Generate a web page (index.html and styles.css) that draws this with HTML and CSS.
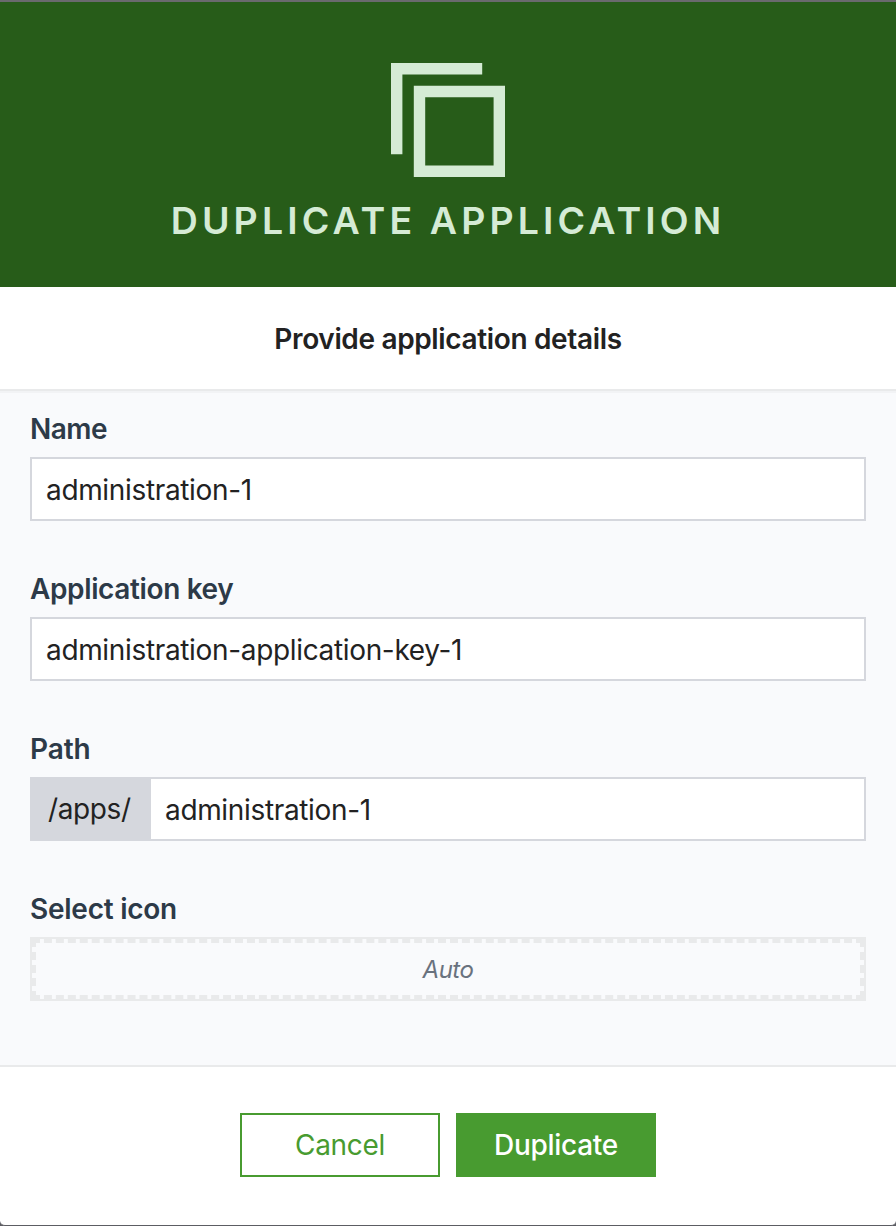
FILE: index.html
```html
<!DOCTYPE html>
<html lang="en">
<head>
<meta charset="utf-8">
<title>Duplicate application</title>
<link rel="stylesheet" href="styles.css">
</head>
<body>
<main class="dialog">
  <header class="hero">
    <svg class="hero-icon" viewBox="0 0 10 10" aria-hidden="true"><path fill="currentColor" fill-rule="evenodd" d="M0 0H8V1H1V8H0ZM2 2H10V10H2ZM3 3V9H9V3Z"/></svg>
    <h1 class="hero-title"><span class="t-title">DUPLICATE APPLICATION</span></h1>
  </header>
  <div class="subtitle"><span class="t-subtitle">Provide application details</span></div>
  <form class="form">
    <section class="field">
      <label class="label"><span class="t-name">Name</span></label>
      <div class="input"><span class="t-value">administration-1</span></div>
    </section>
    <section class="field">
      <label class="label"><span class="t-key">Application key</span></label>
      <div class="input"><span class="t-key-value">administration-application-key-1</span></div>
    </section>
    <section class="field">
      <label class="label"><span class="t-path">Path</span></label>
      <div class="input with-prefix"><span class="prefix"><span class="t-prefix">/apps/</span></span><span class="path-value t-value">administration-1</span></div>
    </section>
    <section class="field">
      <label class="label"><span class="t-icon">Select icon</span></label>
      <div class="icon-picker"><div class="icon-drop"><span class="t-auto">Auto</span></div></div>
    </section>
  </form>
  <footer class="footer">
    <button class="button secondary" type="button"><span class="t-cancel">Cancel</span></button>
    <button class="button primary" type="button"><span class="t-dup">Duplicate</span></button>
  </footer>
</main>
</body>
</html>
```
FILE: styles.css
```css
* { box-sizing: border-box; }
body { margin: 0; background: #5c5d63; font-family: Inter, "Open Sans", sans-serif; font-size: 28px; color: #222; }
.dialog { height: 1226px; border-top: 2px solid #6a6a6e; border-bottom: 1px solid #5c5d63; border-radius: 0 0 5px 5px; background: #fff; display: flex; flex-direction: column; }
.hero { height: 285px; flex: none; background: #275c19; color: #d5ebd5; display: flex; flex-direction: column; align-items: center; padding-top: 61px; }
.hero-icon { width: 114px; height: 114px; display: block; }
.hero-title { margin: 20px 0 0; font-size: 37.5px; font-weight: 600; line-height: 48px; white-space: nowrap; }
.subtitle { height: 104px; flex: none; border-bottom: 2px solid #e9eaeb; display: flex; justify-content: center; padding-top: 32px; line-height: 40px; font-weight: 600; white-space: nowrap; }
.form { height: 676px; flex: none; background: #f9fafc; border-top: 2px solid #f2f3f5; border-bottom: 2px solid #e9eaeb; padding: 16px 30px 0; }
.field { height: 160px; }
.label { display: block; height: 48px; line-height: 40px; font-weight: 600; color: #2d3a48; white-space: nowrap; }
.input { height: 64px; border: 2px solid #d5d7dd; background: #fff; display: flex; align-items: center; padding: 2px 0 0 14px; white-space: nowrap; }
.with-prefix { padding: 0; }
.prefix { width: 119px; height: 60px; margin-right: 14px; padding-left: 16px; background: #d5d7dd; display: flex; align-items: center; }
.path-value { padding-top: 2px; }
.icon-picker { height: 64px; border: 2px solid #e9eaeb; }
.icon-drop { height: 60px; border: 4px dashed #e9eaeb; display: flex; align-items: center; justify-content: center; font-size: 24px; font-style: italic; color: #69727e; }
.footer { display: flex; justify-content: center; gap: 16px; padding-top: 46px; }
.button { width: 200px; height: 64px; padding: 0; border: 2px solid #489b30; font: 500 28px/60px Inter, "Open Sans", sans-serif; white-space: nowrap; }
.secondary { background: #fff; color: #489b30; font-weight: 400; }
.primary { background: #489b30; color: #fff; }
.t-title { letter-spacing: 4.1px; }
.t-subtitle { letter-spacing: -0.35px; }
.t-name { letter-spacing: -0.55px; }
.t-key { letter-spacing: -0.37px; }
.t-path { letter-spacing: -0.1px; }
.t-icon { letter-spacing: -0.25px; }
.t-value, .t-key-value { letter-spacing: -0.34px; }
.t-prefix { letter-spacing: -0.4px; }
.t-auto { letter-spacing: -0.5px; }
.t-cancel, .t-dup { letter-spacing: -0.3px; }
```
